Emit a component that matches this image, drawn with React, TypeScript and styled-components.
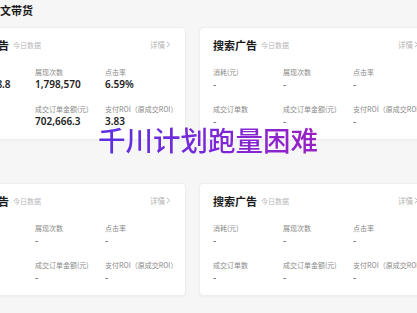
import React from "react";
import styled, { createGlobalStyle } from "styled-components";

const GlobalStyle = createGlobalStyle`
  body {
    margin: 0;
    background: #f6f6f7;
    font-family: "Noto Sans CJK SC", "Noto Sans", sans-serif;
    overflow: hidden;
  }
`;

const Page = styled("div")`
  position: relative;
  width: 520px;
  height: 313px;
  margin-left: -49px;
  padding-top: 3px;
  box-sizing: border-box;
`;

const SectionTitle = styled("p")`
  margin: 0 0 0 38px;
  font-size: 11px;
  line-height: 14px;
  font-weight: bold;
  color: #1a1a1a;
`;

const Grid = styled("div")`
  display: grid;
  grid-template-columns: 235px 235px;
  column-gap: 13px;
  row-gap: 43px;
  margin-top: 10px;
`;

const Card = styled("div")`
  height: 113px;
  box-sizing: border-box;
  padding: 0 14px 0 13px;
  background: #fff;
  border: 1px solid #eeeeee;
  border-radius: 4px;
  box-shadow: 0 1px 3px rgba(0, 0, 0, 0.03);
`;

const CardHeader = styled("div")`
  display: flex;
  align-items: center;
  height: 33px;
`;

const CardTitle = styled("span")`
  font-size: 11px;
  font-weight: bold;
  color: #1a1a1a;
`;

const Hint = styled("span")`
  margin-left: 4px;
  font-size: 7px;
  color: #b8b8b8;
`;

const More = styled("span")`
  margin-left: auto;
  display: flex;
  align-items: center;
  gap: 1px;
  font-size: 7.5px;
  color: #b0b0b0;
`;

const Metrics = styled("div")`
  display: grid;
  grid-template-columns: 70px 70px 70px;
  row-gap: 13px;
  padding-top: 6px;
`;

const Metric = styled("div")`
  display: flex;
  flex-direction: column;
`;

const Label = styled("span")`
  font-size: 7px;
  line-height: 10px;
  color: #8a8a8a;
  white-space: nowrap;
`;

const Value = styled("span")<{ $empty?: boolean }>`
  font-family: "Noto Sans", sans-serif;
  font-size: 10px;
  line-height: 14px;
  font-weight: ${(p) => (p.$empty ? 400 : 600)};
  color: ${(p) => (p.$empty ? "#666" : "#222")};
  white-space: nowrap;
`;

const Overlay = styled("div")`
  position: absolute;
  left: 147px;
  top: 126px;
  font-size: 27.5px;
  line-height: 1;
  font-weight: 500;
  letter-spacing: 0;
  white-space: nowrap;
  background: linear-gradient(90deg, #5a2fe0 0%, #7a28d8 50%, #9a20c4 100%);
  -webkit-background-clip: text;
  background-clip: text;
  color: transparent;
  filter: drop-shadow(0 0 1px rgba(255, 255, 255, 0.9));
`;

type Item = { label: string; value: string };

const filled: Item[] = [
  { label: "消耗(元)", value: "183,418.8" },
  { label: "展现次数", value: "1,798,570" },
  { label: "点击率", value: "6.59%" },
  { label: "成交订单数", value: "1,213" },
  { label: "成交订单金额(元)", value: "702,666.3" },
  { label: "支付ROI（原成交ROI）", value: "3.83" },
];

const emptyItems: Item[] = [
  { label: "消耗(元)", value: "-" },
  { label: "展现次数", value: "-" },
  { label: "点击率", value: "-" },
  { label: "成交订单数", value: "-" },
  { label: "成交订单金额(元)", value: "-" },
  { label: "支付ROI（原成交ROI）", value: "-" },
];

function Chevron() {
  return (
    <svg width="5" height="7" viewBox="0 0 5 7">
      <path d="M1 1 L3.8 3.5 L1 6" stroke="#b0b0b0" strokeWidth="0.9" fill="none" />
    </svg>
  );
}

function AdCard({ title, items }: { title: string; items: Item[] }) {
  return (
    <Card>
      <CardHeader>
        <CardTitle>{title}</CardTitle>
        <Hint>今日数据</Hint>
        <More>
          详情
          <Chevron />
        </More>
      </CardHeader>
      <Metrics>
        {items.map((it) => (
          <Metric key={it.label}>
            <Label>{it.label}</Label>
            <Value $empty={it.value === "-"}>{it.value}</Value>
          </Metric>
        ))}
      </Metrics>
    </Card>
  );
}

export default function App() {
  return (
    <>
      <GlobalStyle />
      <Page>
        <SectionTitle>图文带货</SectionTitle>
        <Grid>
          <AdCard title="通投广告" items={filled} />
          <AdCard title="搜索广告" items={emptyItems} />
          <AdCard title="通投广告" items={emptyItems} />
          <AdCard title="搜索广告" items={emptyItems} />
        </Grid>
        <Overlay>千川计划跑量困难</Overlay>
      </Page>
    </>
  );
}
